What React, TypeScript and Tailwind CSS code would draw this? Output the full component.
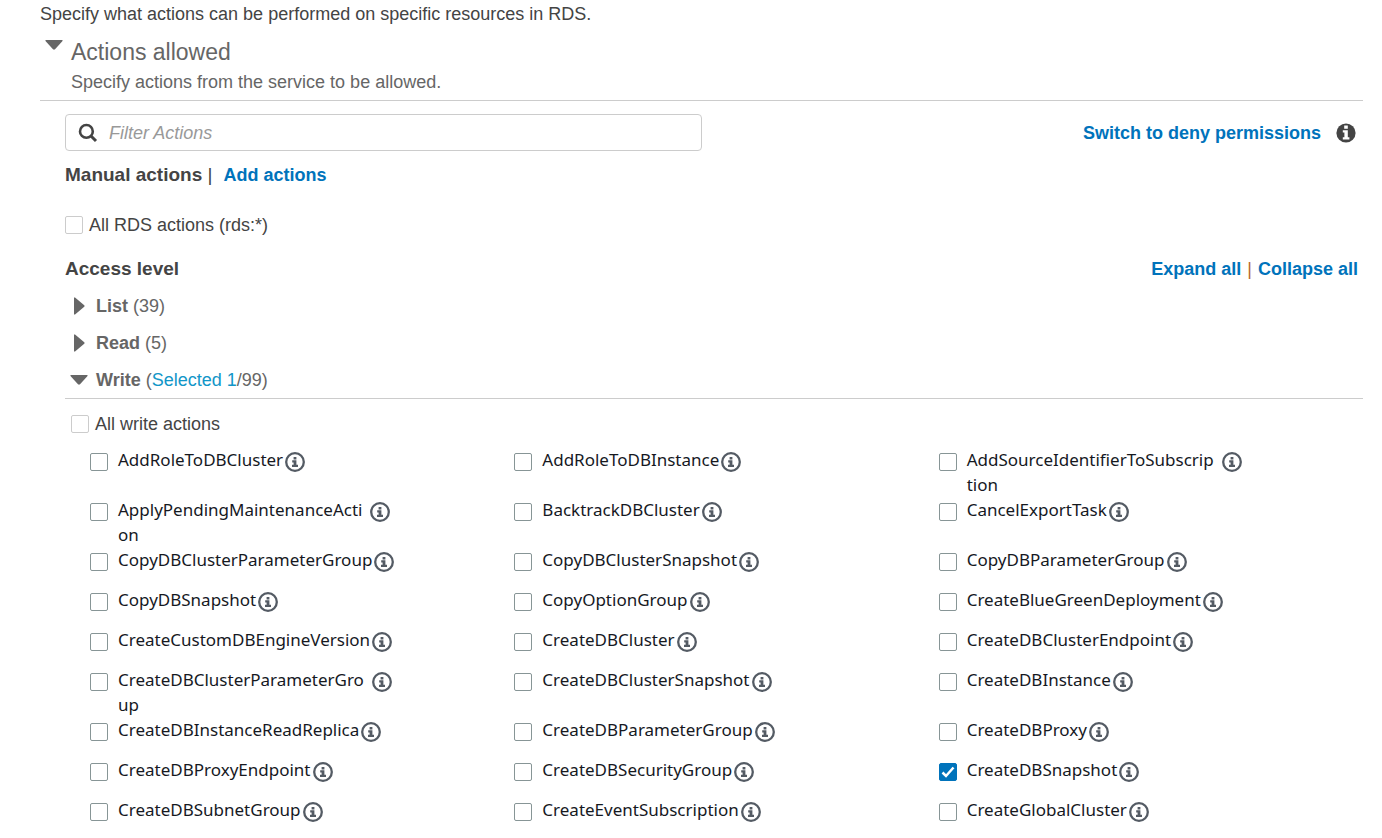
import React, { useState } from 'react';
import clsx from 'clsx';

interface Action {
  name: string;
  // set when the name does not fit on one line
  rest?: string;
}

const writeActions: Action[] = [
  { name: 'AddRoleToDBCluster' },
  { name: 'AddRoleToDBInstance' },
  { name: 'AddSourceIdentifierToSubscrip', rest: 'tion' },
  { name: 'ApplyPendingMaintenanceActi', rest: 'on' },
  { name: 'BacktrackDBCluster' },
  { name: 'CancelExportTask' },
  { name: 'CopyDBClusterParameterGroup' },
  { name: 'CopyDBClusterSnapshot' },
  { name: 'CopyDBParameterGroup' },
  { name: 'CopyDBSnapshot' },
  { name: 'CopyOptionGroup' },
  { name: 'CreateBlueGreenDeployment' },
  { name: 'CreateCustomDBEngineVersion' },
  { name: 'CreateDBCluster' },
  { name: 'CreateDBClusterEndpoint' },
  { name: 'CreateDBClusterParameterGro', rest: 'up' },
  { name: 'CreateDBClusterSnapshot' },
  { name: 'CreateDBInstance' },
  { name: 'CreateDBInstanceReadReplica' },
  { name: 'CreateDBParameterGroup' },
  { name: 'CreateDBProxy' },
  { name: 'CreateDBProxyEndpoint' },
  { name: 'CreateDBSecurityGroup' },
  { name: 'CreateDBSnapshot' },
  { name: 'CreateDBSubnetGroup' },
  { name: 'CreateEventSubscription' },
  { name: 'CreateGlobalCluster' },
];

const Caret = ({ open }: { open: boolean }) => (
  <svg viewBox="0 0 18 18" className="h-[18px] w-[18px] shrink-0 fill-[#666]" aria-hidden="true">
    {open ? <path d="M0.5 4H17.5V5L9.8 13.5H8.2L0.5 5Z" /> : <path d="M4 0.5H5L14.5 8.4V9.6L5 17.5H4Z" />}
  </svg>
);

const InfoIcon = () => (
  <svg viewBox="0 0 20 20" className="h-5 w-5" aria-hidden="true">
    <circle cx="10" cy="10" r="8.8" fill="none" stroke="#545b64" strokeWidth="2.3" />
    <path d="M8.6 5H11.4V7.4H8.6ZM7.2 8.3H11.4V12.8H13V15H7V12.8H8.6V10.4H7.2Z" fill="#545b64" />
  </svg>
);

const InfoSolid = () => (
  <svg viewBox="0 0 20 20" className="h-5 w-5" aria-hidden="true">
    <circle cx="10" cy="10" r="9.6" fill="#444" />
    <path d="M8.2 2.6H11.8V5.8H8.2ZM6.8 7.3H11.8V14.2H13.4V16.4H6.8V14.2H8.4V9.5H6.8Z" fill="#fff" />
  </svg>
);

const Checkbox = ({ id, dark, checked, onChange }: { id: string; dark?: boolean; checked: boolean; onChange: () => void }) => (
  <span className="relative h-[18px] w-[18px] shrink-0">
    <input
      id={id}
      type="checkbox"
      checked={checked}
      onChange={onChange}
      className={clsx(
        'block h-[18px] w-[18px] appearance-none rounded-xs border bg-white checked:border-[#0073bb] checked:bg-[#0073bb]',
        dark ? 'border-[#879596]' : 'border-[#ccc]',
      )}
    />
    {checked && (
      <svg viewBox="0 0 18 18" className="pointer-events-none absolute inset-0" aria-hidden="true">
        <path d="M3.5 9.5L7 13L14.5 4.5" fill="none" stroke="#fff" strokeWidth="2.5" />
      </svg>
    )}
  </span>
);

const linkClass = 'cursor-pointer font-bold text-[#0073bb] hover:underline';

export default function App() {
  const [filter, setFilter] = useState('');
  const [allActions, setAllActions] = useState(false);
  const [allWrite, setAllWrite] = useState(false);
  const [selected, setSelected] = useState<string[]>(['CreateDBSnapshot']);

  const toggle = (key: string) =>
    setSelected((prev) => (prev.includes(key) ? prev.filter((k) => k !== key) : [...prev, key]));

  const visible = writeActions.filter((a) =>
    (a.name + (a.rest ?? '')).toLowerCase().includes(filter.toLowerCase()),
  );

  return (
    <main className="min-h-screen bg-white pr-[19px] pl-10 font-['Liberation_Sans',Arial,sans-serif] text-[18px] leading-7 text-[#444]">
      <p>Specify what actions can be performed on specific resources in RDS.</p>

      {/* Section header */}
      <header className="flex gap-2 border-b border-[#ccc] pt-2 pb-1 pl-[5px] text-[#666]">
        <button type="button" aria-label="Toggle actions allowed" className="h-[18px] cursor-pointer">
          <Caret open />
        </button>
        <div>
          <h2 className="text-[23px] leading-8">Actions allowed</h2>
          <p>Specify actions from the service to be allowed.</p>
        </div>
      </header>

      <div className="pl-[25px]">
        {/* Filter */}
        <div className="flex items-center justify-between pt-[13px] pr-[7px]">
          <div className="flex h-[37px] w-[637px] items-center gap-[11px] rounded border border-[#ccc] px-3">
            <svg viewBox="0 0 20 20" className="h-5 w-5 shrink-0" fill="none" stroke="#444" aria-hidden="true">
              <circle cx="8.4" cy="8.4" r="6.4" strokeWidth="2.6" />
              <path d="M13 13L18 18" strokeWidth="3" />
            </svg>
            <input
              type="text"
              aria-label="Filter Actions"
              placeholder="Filter Actions"
              value={filter}
              onChange={(e) => setFilter(e.target.value)}
              className="w-full min-w-0 outline-none placeholder:text-[#999] placeholder:italic"
            />
          </div>
          <div className="flex items-center gap-[15px]">
            <button type="button" className={linkClass}>Switch to deny permissions</button>
            <button type="button" aria-label="Info"><InfoSolid /></button>
          </div>
        </div>

        <div className="flex pt-[10px]">
          <h3 className="text-[19px] font-bold">Manual actions <span className="font-normal">|</span></h3>
          <button type="button" className={clsx(linkClass, 'ml-[11px]')}>Add actions</button>
        </div>

        <div className="flex items-center gap-[6px] pt-[22px]">
          <Checkbox id="all-rds" checked={allActions} onChange={() => setAllActions(!allActions)} />
          <label htmlFor="all-rds">All RDS actions (rds:*)</label>
        </div>

        {/* Access levels */}
        <div className="flex items-center justify-between pt-4 pr-[5px]">
          <h3 className="text-[19px] font-bold">Access level</h3>
          <div className="flex gap-[6px]">
            <button type="button" className={linkClass}>Expand all</button>
            <span className="text-[#b7672f]">|</span>
            <button type="button" className={linkClass}>Collapse all</button>
          </div>
        </div>

        <ul className="flex flex-col gap-[9px] border-b border-[#ccc] pt-[9px] pb-1 pl-[5px] text-[#666]">
          <li>
            <button type="button" className="flex cursor-pointer items-center gap-2">
              <Caret open={false} />
              <span><b>List</b> (39)</span>
            </button>
          </li>
          <li>
            <button type="button" className="flex cursor-pointer items-center gap-2">
              <Caret open={false} />
              <span><b>Read</b> (5)</span>
            </button>
          </li>
          <li>
            <button type="button" className="flex cursor-pointer items-center gap-2">
              <Caret open />
              <span><b>Write</b> (<span className="text-[#1196c8]">Selected {selected.length}</span>/99)</span>
            </button>
          </li>
        </ul>

        <div className="flex items-center gap-[6px] pt-[11px] pl-[6px]">
          <Checkbox id="all-write" checked={allWrite} onChange={() => setAllWrite(!allWrite)} />
          <label htmlFor="all-write">All write actions</label>
        </div>

        {/* Write actions */}
        <ul className="grid grid-cols-3 pt-[9px] pl-[25px] font-['Noto_Sans',sans-serif] text-[17px] leading-[25px] text-[#16191f]">
          {visible.map((action) => (
            <li key={action.name} className="flex min-h-10 items-start">
              <span className="pt-[6px]">
                <Checkbox id={action.name} dark checked={selected.includes(action.name)} onChange={() => toggle(action.name)} />
              </span>
              <label htmlFor={action.name} className="ml-[10px]">
                {action.name}
                {action.rest && <><br />{action.rest}</>}
              </label>
              <button type="button" aria-label={`About ${action.name}`} className={clsx('mt-[5px]', action.rest ? 'ml-2' : 'ml-[2px]')}>
                <InfoIcon />
              </button>
            </li>
          ))}
        </ul>
      </div>
    </main>
  );
}
